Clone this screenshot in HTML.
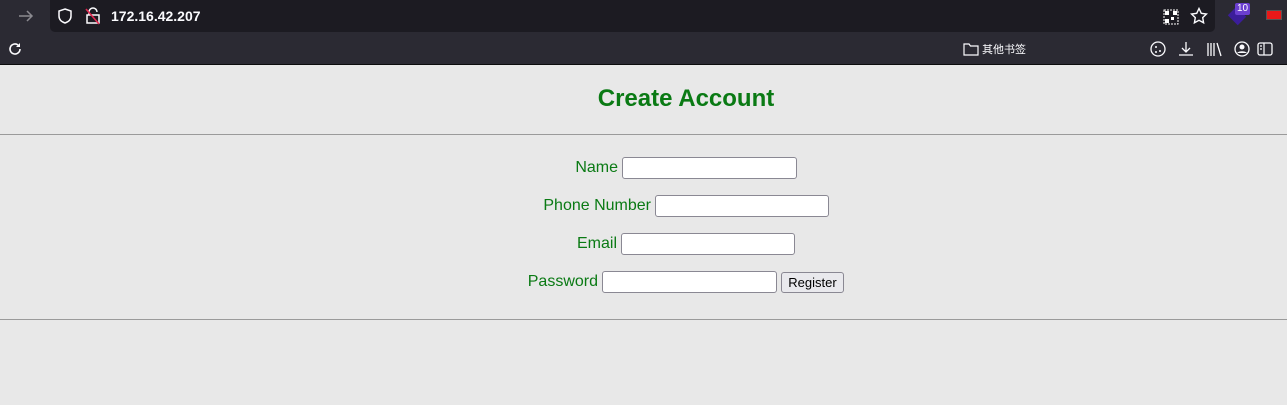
<!DOCTYPE html>
<html><head><meta charset="utf-8"><style>
*{margin:0;padding:0;box-sizing:border-box}
body{width:1287px;height:405px;background:#e8e8e8;position:relative;overflow:hidden;font-family:"Liberation Sans",Arial,sans-serif}
.a{position:absolute}
.lbl{position:absolute;color:#0a7a14;font-size:16px;line-height:20px;text-align:right}
.in{position:absolute;background:#fff;border:1px solid #8a8893;border-radius:3px;height:22px}
</style></head><body>
<div class="a" style="left:0;top:0;width:1287px;height:64px;background:#2b2a33"></div>
<div class="a" style="left:50px;top:0;width:1165px;height:32px;background:#1c1b22;border-radius:0 0 5px 5px"></div>
<div class="a" style="left:0;top:64px;width:1287px;height:1px;background:#0c0c0d"></div>
<svg class="a" style="left:16px;top:8px" width="20" height="16"><path d="M3 8h13M11 3l5 5-5 5" stroke="#8b8a90" stroke-width="1.5" fill="none"/></svg>
<svg class="a" style="left:57px;top:7px" width="16" height="18"><path d="M8 2l6 2v5c0 4-3 6-6 7-3-1-6-3-6-7V4z" stroke="#fbfbfe" stroke-width="1.5" fill="none"/></svg>
<svg class="a" style="left:84px;top:6px" width="18" height="20"><path d="M5 9V6a4 4 0 0 1 8 0M3 9h12v8H3z" stroke="#fbfbfe" stroke-width="1.5" fill="none"/><path d="M2 3l13 15" stroke="#e22850" stroke-width="1.6"/></svg>
<div class="a" style="left:111px;top:7px;color:#fbfbfe;font-size:14px;font-weight:bold;line-height:18px">172.16.42.207</div>
<svg class="a" style="left:7px;top:41px" width="16" height="16"><path d="M13 8a5 5 0 1 1-2-4" stroke="#fbfbfe" stroke-width="1.6" fill="none"/><path d="M13 2v4h-4" fill="#fbfbfe"/></svg>
<svg class="a" style="left:1163px;top:9px" width="16" height="16"><rect x="1" y="1" width="14" height="14" fill="none" stroke="#fff" stroke-width="1" stroke-dasharray="2 1"/><rect x="2" y="2" width="4" height="4" fill="#fff"/><rect x="10" y="2" width="4" height="4" fill="#fff"/><rect x="2" y="10" width="4" height="4" fill="#fff"/><rect x="8" y="8" width="3" height="3" fill="#fff"/></svg>
<svg class="a" style="left:1190px;top:7px" width="18" height="18"><path d="M9 1.5l2.3 4.8 5.2.7-3.8 3.6.9 5.2L9 13.3 4.4 15.8l.9-5.2L1.5 7l5.2-.7z" stroke="#fbfbfe" stroke-width="1.4" fill="none"/></svg>
<div class="a" style="left:1230px;top:10px;width:14px;height:12px;background:#3b1d9a;transform:rotate(45deg)"></div>
<div class="a" style="left:1235px;top:3px;width:15px;height:12px;background:#6b3fd0;color:#fff;font-size:10px;line-height:12px;text-align:center;border-radius:2px">10</div>
<div class="a" style="left:1266px;top:10px;width:16px;height:10px;background:#e81818;border:1px solid #555"></div>
<svg class="a" style="left:963px;top:42px" width="16" height="14"><path d="M1 2h5l1.5 2H15v9H1z" stroke="#fbfbfe" stroke-width="1.2" fill="none"/></svg>
<div class="a" style="left:982px;top:42px;color:#fbfbfe;font-size:11px;font-family:'Noto Sans CJK SC',sans-serif;line-height:14px">其他书签</div>
<svg class="a" style="left:1148px;top:40px" width="130" height="18"><circle cx="10" cy="9" r="7" stroke="#fbfbfe" stroke-width="1.3" fill="none"/><circle cx="8" cy="7" r="1" fill="#fbfbfe"/><circle cx="12" cy="11" r="1" fill="#fbfbfe"/><circle cx="8" cy="12" r="1" fill="#fbfbfe"/>
<path d="M38 2v10M34 8l4 4 4-4M31 15h14" stroke="#fbfbfe" stroke-width="1.3" fill="none"/>
<path d="M60 3v13M63 3v13M66 3v13M69 3l4 13" stroke="#fbfbfe" stroke-width="1.3"/>
<circle cx="94" cy="9" r="7" stroke="#fbfbfe" stroke-width="1.3" fill="none"/><circle cx="94" cy="7" r="2.5" fill="#fbfbfe"/><path d="M89 13a6 4 0 0 1 10 0" fill="#fbfbfe"/>
<rect x="110" y="3" width="14" height="12" rx="2" stroke="#fbfbfe" stroke-width="1.3" fill="none"/><path d="M116 3v12M112 6h2M112 9h2" stroke="#fbfbfe" stroke-width="1.2"/></svg>
<div class="a" style="left:0;top:85px;width:1372px;text-align:center;color:#0a7a14;font-size:24px;font-weight:bold;line-height:28px">Create Account</div>
<div class="a" style="left:0;top:134px;width:1287px;height:1px;background:#9a9a9a"></div>
<div class="a" style="left:0;top:319px;width:1287px;height:1px;background:#9a9a9a"></div>
<div class="lbl" style="left:518px;top:158px;width:100px">Name</div>
<div class="in" style="left:622px;top:157px;width:175px"></div>
<div class="lbl" style="left:500px;top:196px;width:151px">Phone Number</div>
<div class="in" style="left:655px;top:195px;width:174px"></div>
<div class="lbl" style="left:500px;top:234px;width:117px">Email</div>
<div class="in" style="left:621px;top:233px;width:174px"></div>
<div class="lbl" style="left:490px;top:272px;width:108px">Password</div>
<div class="in" style="left:602px;top:271px;width:175px"></div>
<div class="a" style="left:781px;top:272px;width:63px;height:21px;background:#e9e9ed;border:1px solid #8a8893;border-radius:3px;font-size:13px;line-height:19px;text-align:center;color:#000">Register</div>
</body></html>
